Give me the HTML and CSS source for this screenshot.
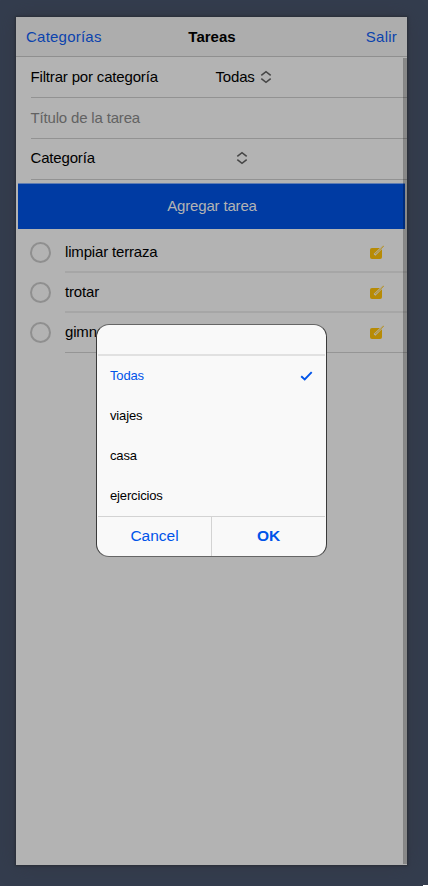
FILE: index.html
```html
<!DOCTYPE html>
<html lang="es">
<head>
<meta charset="utf-8">
<title>Tareas</title>
<link rel="stylesheet" href="styles.css">
</head>
<body>
<svg class="defs" width="0" height="0">
  <symbol id="chevrons" viewBox="0 0 12 14"><path d="M1.300 5.300 6 1.600l4.700 3.700M1.300 8.700 6 12.400l4.700-3.700" fill="none" stroke="#454545" stroke-width="1.500"/></symbol>
  <symbol id="edit" viewBox="0 0 16 15"><rect x="1" y="3" width="12" height="11" rx="2" fill="#b78b05"/><path d="M5.500 9.800 13 2.500" stroke="#b3b3b3" stroke-width="2.400"/><path d="M6.500 9 14.500 1" stroke="#b78b05" stroke-width="1.200" stroke-dasharray="1 .5"/></symbol>
</svg>
<main class="phone">
  <header class="toolbar">
    <a class="link">Categorías</a>
    <h1>Tareas</h1>
    <a class="link end">Salir</a>
  </header>
  <section class="form">
    <div class="row"><span class="label">Filtrar por categoría</span><span class="value">Todas</span><svg class="chevrons"><use href="#chevrons"/></svg></div>
    <div class="row hint">Título de la tarea</div>
    <div class="row category"><span class="label wide">Categoría</span><svg class="chevrons"><use href="#chevrons"/></svg></div>
  </section>
  <button class="add">Agregar tarea</button>
  <ul class="tasks">
    <li><i class="circle"></i><div class="task"><span>limpiar terraza</span><svg class="edit"><use href="#edit"/></svg></div></li>
    <li><i class="circle"></i><div class="task"><span>trotar</span><svg class="edit"><use href="#edit"/></svg></div></li>
    <li><i class="circle"></i><div class="task"><span>gimnasio</span><svg class="edit"><use href="#edit"/></svg></div></li>
  </ul>
  <i class="scrollbar"></i>
</main>
<section class="alert">
  <div class="alert-head"></div>
  <div class="option selected"><span>Todas</span><svg width="14" height="12" viewBox="0 0 14 12"><path d="M2.200 6.300 5.700 9.500 12.700 2.200" fill="none" stroke="#0054e9" stroke-width="1.900"/></svg></div>
  <div class="option">viajes</div>
  <div class="option">casa</div>
  <div class="option">ejercicios</div>
  <div class="actions"><button>Cancel</button><button class="ok">OK</button></div>
</section>
<i class="corner"></i>
</body>
</html>
```
FILE: styles.css
```css
* { box-sizing: border-box; }
body {
  margin: 0;
  height: 886px;
  padding: 17px 21px 21px 16px;
  overflow: hidden;
  position: relative;
  background: #343d4e;
  font: 15px/20px "Liberation Sans", Arial, sans-serif;
  color: #000;
}
.defs { position: absolute; }
.phone {
  position: relative;
  height: 848px;
  background: #b3b3b3;
  box-shadow: 0 0 2px 1px #292e37, 0 0 18px rgba(50, 51, 62, .6);
}
.toolbar {
  display: grid;
  grid-template-columns: 1fr auto 1fr;
  align-items: center;
  height: 40px;
  padding: 0 10px;
  background: #adadad;
  border-bottom: 1px solid #8f8f8f;
}
.toolbar h1 { margin: 0; padding-left: 1px; font-size: 15px; line-height: 20px; }
.link { color: #0b43ad; letter-spacing: .23px; }
.end { text-align: right; }
.form { padding-left: 14.500px; letter-spacing: -.17px; }
.row {
  display: flex;
  align-items: center;
  height: 41px;
  border-bottom: 1px solid #929292;
}
.category { padding-bottom: 2px; }
.label { width: 185px; }
.wide { width: 205px; }
.value { margin-right: 5.500px; }
.chevrons { width: 12px; height: 14px; }
.hint { color: #626262; }
button { border: 0; padding: 0; background: none; font: inherit; }
.add {
  display: block;
  width: 387px;
  height: 45px;
  margin: 4px 2px 0;
  padding: 0 0 1px 1px;
  background: #003ba3;
  color: #b3b3b3;
  letter-spacing: -.17px;
  box-shadow: 0 -1px #5f7db2;
}
.tasks { list-style: none; margin: 3px 0 0; padding: 0 0 0 14px; }
.tasks li { display: flex; align-items: center; height: 40px; }
.circle {
  width: 21px;
  height: 21px;
  margin: 1px 14px 0 0;
  border: 2px solid #8f8f8f;
  border-radius: 50%;
}
.task {
  display: flex;
  flex: 1;
  align-items: center;
  justify-content: space-between;
  height: 41px;
  margin-top: 1px;
  padding-right: 22px;
  border-bottom: 2px solid #a6a6a6;
}
.task span { letter-spacing: -.17px; }
.edit { width: 16px; height: 15px; margin-top: 1px; }
.tasks li:last-child .task { border-bottom: 1px solid #959595; }
.scrollbar {
  position: absolute;
  top: 41px;
  right: 0;
  bottom: 1px;
  width: 4px;
  background: rgba(0, 0, 0, .24);
  border-left: 1px solid rgba(0, 0, 0, .02);
}
.alert {
  position: absolute;
  left: 96px;
  top: 324px;
  width: 231px;
  height: 233px;
  padding: 0 1px;
  border: 1px solid #3a3a3a;
  border-top-color: #666;
  border-bottom-color: #666;
  border-radius: 13px;
  background: #f9f9f9;
}
.alert-head { height: 31px; border-bottom: 2px solid #e1e1e1; }
.option {
  display: flex;
  align-items: center;
  justify-content: space-between;
  height: 40px;
  padding: 0 12px;
  font-size: 13px;
  letter-spacing: -.15px;
}
.selected { color: #0054e9; }
.actions { display: flex; height: 40px; border-top: 1px solid #d3d3d3; color: #0054e9; }
.actions button { width: 114px; padding-bottom: 2px; color: inherit; font-size: 15.500px; }
.actions button:first-child { width: 113px; }
.actions .ok { border-left: 1px solid #d3d3d3; font-weight: bold; }
.corner { position: absolute; right: 0; bottom: 0; width: 5px; height: 1px; background: #fff; }
```
